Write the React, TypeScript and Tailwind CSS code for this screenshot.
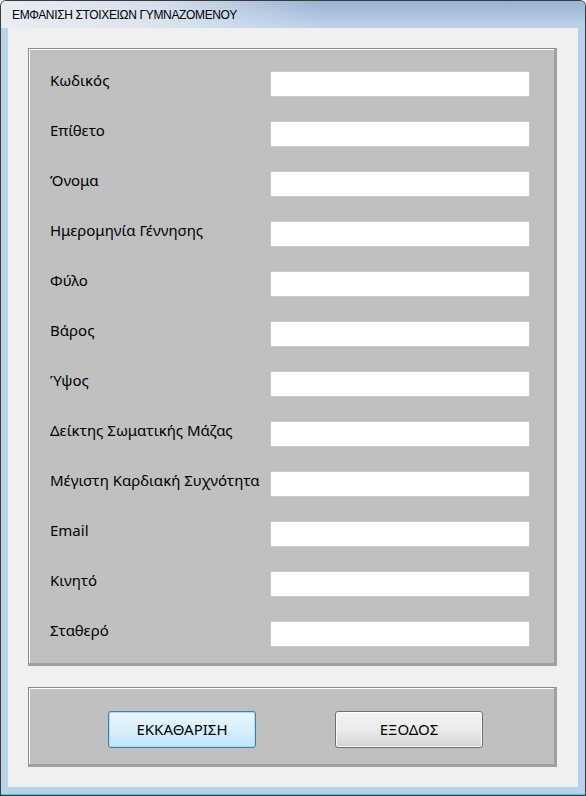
import React from 'react'

const FIELDS = [
  'Κωδικός',
  'Επίθετο',
  'Όνομα',
  'Ημερομηνία Γέννησης',
  'Φύλο',
  'Βάρος',
  'Ύψος',
  'Δείκτης Σωματικής Μάζας',
  'Μέγιστη Καρδιακή Συχνότητα',
  'Email',
  'Κινητό',
  'Σταθερό',
]

const UI_FONT = { fontFamily: '"Noto Sans", "DejaVu Sans", sans-serif' }

// sunken 3D group box, WinForms style
function GroupPanel({ className, children }: { className?: string; children: React.ReactNode }) {
  return (
    <div className={'border-t border-l border-t-[#8a8a8a] border-l-[#8a8a8a] border-r-[3px] border-b-[3px] border-r-[#a0a0a0] border-b-[#a0a0a0] ' + (className ?? '')}>
      <div className="h-full border-t border-l border-white bg-[#c0c0c0]">{children}</div>
    </div>
  )
}

export default function App() {
  return (
    <div
      className="w-[586px] h-[796px] flex flex-col bg-[#3a3a3a] p-px rounded-t-[6px] overflow-hidden"
      style={{ fontFamily: '"Liberation Sans", "DejaVu Sans", sans-serif' }}
    >
      <div className="flex-1 flex flex-col rounded-t-[5px] bg-[#b9d1ea] border-b border-[#1fd6e6]">
        {/* Title bar */}
        <div className="h-[27px] flex bg-gradient-to-b from-[#98b2d1] to-[#bcd4eb] rounded-t-[5px] overflow-hidden">
          <div className="w-[320px] h-full flex items-center pl-[11px] bg-gradient-to-r from-[#e8edf3] via-[#e2e9f1]/80 to-transparent">
            <span className="text-[12px] text-black tracking-[-0.35px]">ΕΜΦΑΝΙΣΗ ΣΤΟΙΧΕΙΩΝ ΓΥΜΝΑΖΟΜΕΝΟΥ</span>
          </div>
        </div>

        {/* Client area */}
        <div className="mx-[7px] mb-[7px] flex-1 bg-[#f0f0f0] pt-[20px] pl-[20px] pr-[21px] flex flex-col gap-[21px]">
          <GroupPanel className="h-[618px]">
            <div className="pt-[21px] pl-[20px] flex flex-col gap-[24px]" style={UI_FONT}>
              {FIELDS.map((label) => (
                <div key={label} className="flex items-center h-[26px]">
                  <span className="w-[220px] text-[15px] text-black pb-[8px] whitespace-nowrap">{label}</span>
                  <div className="w-[260px] h-[26px] bg-white border border-[#c6c8d2]" />
                </div>
              ))}
            </div>
          </GroupPanel>

          <GroupPanel className="h-[80px]">
            <div className="pt-[22px] pl-[78px] flex gap-[79px]" style={UI_FONT}>
              <button className="w-[148px] h-[37px] rounded-[3px] border border-[#3c7fb1] bg-gradient-to-b from-[#eaf6fd] via-[#d9f0fc] to-[#bee6fd] text-[15px] text-black shadow-[inset_0_0_0_1px_#a6dcf5]">
                ΕΚΚΑΘΑΡΙΣΗ
              </button>
              <button className="w-[148px] h-[37px] rounded-[3px] border border-[#707070] bg-gradient-to-b from-[#f2f2f2] via-[#ebebeb] to-[#d4d4d4] text-[15px] text-black shadow-[inset_0_0_0_1px_#fbfbfb]">
                ΕΞΟΔΟΣ
              </button>
            </div>
          </GroupPanel>
        </div>
      </div>
    </div>
  )
}
